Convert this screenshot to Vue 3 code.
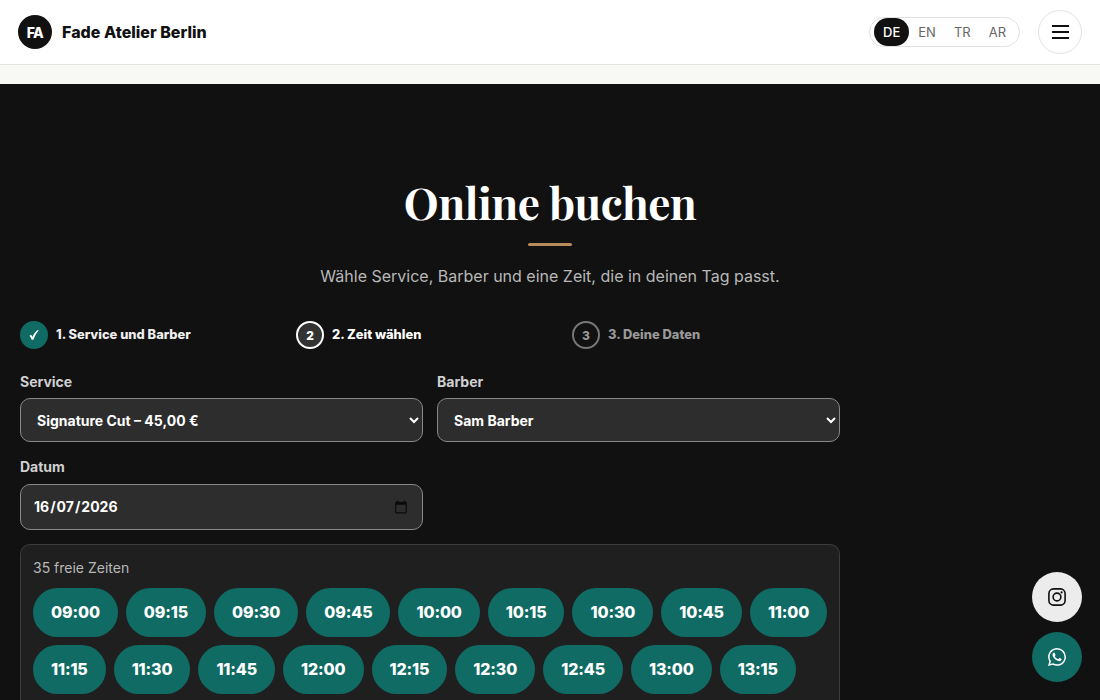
<template>
  <div class="page">
    <header class="top">
      <a class="brand">
        <span class="logo">FA</span>
        <span class="brand-name">Fade Atelier Berlin</span>
      </a>
      <div class="top-right">
        <nav class="langs">
          <button v-for="l in langs" :key="l" :class="{ on: l === lang }" @click="lang = l">{{ l }}</button>
        </nav>
        <button class="burger" aria-label="Menü"><i></i><i></i><i></i></button>
      </div>
    </header>

    <section class="booking">
      <h1>Online buchen</h1>
      <div class="rule"></div>
      <p class="lead">Wähle Service, Barber und eine Zeit, die in deinen Tag passt.</p>

      <div class="wrap">
        <ol class="steps">
          <li v-for="(s, i) in steps" :key="s" :class="{ done: i + 1 < step, now: i + 1 === step }">
            <span class="dot">
              <svg v-if="i + 1 < step" width="12" height="12" viewBox="0 0 12 12" fill="currentColor">
                <path d="M1.5 6.7 3 5.8c.7.7 1.1 1.4 1.4 2.2C5.600 5.300 7.200 3 9.300 1.300h1.500C8.300 4.200 6.600 7.300 5.400 10.800H3.700C3.300 9.200 2.600 7.900 1.500 6.700z" />
              </svg>
              <template v-else>{{ i + 1 }}</template>
            </span>
            <span class="step-name">{{ i + 1 }}. {{ s }}</span>
          </li>
        </ol>

        <div class="fields">
          <label>
            <span>Service</span>
            <select v-model="service">
              <option>Signature Cut – 45,00 €</option>
            </select>
          </label>
          <label>
            <span>Barber</span>
            <select v-model="barber">
              <option>Sam Barber</option>
            </select>
          </label>
          <label>
            <span>Datum</span>
            <div class="date">
              <span class="dmy"><b>16</b>/<b>07</b>/<b>2026</b></span>
              <svg width="14" height="14" viewBox="0 0 24 24" fill="#0a0a0a">
                <path d="M20 3h-1V1h-2v2H7V1H5v2H4c-1.1 0-2 .9-2 2v16c0 1.1.9 2 2 2h16c1.1 0 2-.9 2-2V5c0-1.1-.9-2-2-2zm0 18H4V8h16v13z" />
              </svg>
            </div>
          </label>
        </div>

        <div class="slots">
          <p>35 freie Zeiten</p>
          <div class="times">
            <button v-for="t in times" :key="t" @click="time = t">{{ t }}</button>
          </div>
        </div>
      </div>
    </section>

    <div class="social">
      <a class="ig" aria-label="Instagram">
        <svg width="20" height="20" viewBox="0 0 20 20" fill="none" stroke="currentColor" stroke-width="1.6">
          <rect x="1.9" y="1.9" width="16.2" height="16.2" rx="4.6" />
          <circle cx="10" cy="10" r="3.9" />
          <circle cx="14.6" cy="5.4" r="1.1" fill="currentColor" stroke="none" />
        </svg>
      </a>
      <a class="wa" aria-label="WhatsApp">
        <svg width="18" height="18" viewBox="0 0 24 24" fill="currentColor">
          <path d="M17.472 14.382c-.297-.149-1.758-.867-2.03-.967-.273-.099-.471-.148-.67.15-.197.297-.767.966-.94 1.164-.173.199-.347.223-.644.075-.297-.15-1.255-.463-2.39-1.475-.883-.788-1.48-1.761-1.653-2.059-.173-.297-.018-.458.13-.606.134-.133.298-.347.446-.52.149-.174.198-.298.298-.497.099-.198.05-.371-.025-.52-.075-.149-.669-1.612-.916-2.207-.242-.579-.487-.5-.669-.51-.173-.008-.371-.01-.57-.01-.198 0-.52.074-.792.372-.272.297-1.04 1.016-1.04 2.479 0 1.462 1.065 2.875 1.213 3.074.149.198 2.096 3.2 5.077 4.487.709.306 1.262.489 1.694.625.712.227 1.36.195 1.871.118.571-.085 1.758-.719 2.006-1.413.248-.694.248-1.289.173-1.413-.074-.124-.272-.198-.57-.347m-5.421 7.403h-.004a9.87 9.87 0 01-5.031-1.378l-.361-.214-3.741.982.998-3.648-.235-.374a9.86 9.86 0 01-1.51-5.26c.001-5.45 4.436-9.884 9.888-9.884 2.64 0 5.122 1.03 6.988 2.898a9.825 9.825 0 012.893 6.994c-.003 5.45-4.437 9.884-9.885 9.884m8.413-18.297A11.815 11.815 0 0012.05 0C5.495 0 .16 5.335.157 11.892c0 2.096.547 4.142 1.588 5.945L.057 24l6.305-1.654a11.882 11.882 0 005.683 1.448h.005c6.554 0 11.89-5.335 11.893-11.893a11.821 11.821 0 00-3.48-8.413z" />
        </svg>
      </a>
    </div>
  </div>
</template>

<script setup>
import { ref } from 'vue'

const langs = ['DE', 'EN', 'TR', 'AR']
const lang = ref('DE')

const steps = ['Service und Barber', 'Zeit wählen', 'Deine Daten']
const step = ref(2)

const service = ref('Signature Cut – 45,00 €')
const barber = ref('Sam Barber')
const time = ref('')

// quarter-hour slots from 09:00
const pad = n => String(n).padStart(2, '0')
const times = Array.from({ length: 18 }, (_, i) => `${pad(9 + Math.floor(i / 4))}:${pad((i % 4) * 15)}`)
</script>

<style>
body { margin: 0; background: #f8f8f4; }
</style>

<style scoped>
* { box-sizing: border-box; }
.page { height: 700px; overflow: hidden; display: flex; flex-direction: column; font-family: Inter, "Liberation Sans", sans-serif; color: #111; background: #f8f8f4; }
button, select { font-family: inherit; cursor: pointer; }

.top { flex: none; height: 65px; padding: 0 18px; display: flex; align-items: center; justify-content: space-between; background: #fff; border-bottom: 1px solid #e4e4e1; }
.brand { display: flex; align-items: center; gap: 10px; }
.logo { width: 34px; height: 34px; border-radius: 50%; background: #111; color: #fff; display: flex; align-items: center; justify-content: center; font-size: 14px; font-weight: 800; letter-spacing: -0.5px; }
.brand-name { font-size: 16px; font-weight: 800; }
.top-right { display: flex; align-items: center; gap: 18px; }
.langs { height: 30px; display: flex; align-items: center; padding: 0 4px; border: 1px solid #e2e2e0; border-radius: 999px; }
.langs button { height: 28px; padding: 0 9px; border: 0; border-radius: 999px; background: none; color: #666; font-size: 13px; }
.langs .on { background: #111; color: #fff; font-weight: 500; }
.burger { width: 44px; height: 44px; padding: 0; border: 1px solid #e2e2e0; border-radius: 50%; background: #fff; display: flex; flex-direction: column; align-items: center; justify-content: center; gap: 4px; }
.burger i { width: 17px; height: 2px; background: #111; }

.booking { flex: 1; min-height: 0; margin-top: 19px; padding: 86px 20px 0; background: #111; color: #fff; display: flex; flex-direction: column; }
h1 { margin: 0; text-align: center; font-family: "Playfair Display", "Liberation Serif", serif; font-size: 44px; font-weight: 700; line-height: 64px; letter-spacing: -0.5px; }
.rule { flex: none; width: 44px; height: 3px; margin: 9px auto 0; border-radius: 2px; background: #b88c5a; }
.lead { margin: 17px 0 0; text-align: center; font-size: 16px; line-height: 27px; color: #b8b8b8; }

.wrap { width: 820px; flex: 1; display: flex; flex-direction: column; }
.steps { list-style: none; margin: 31px 0 0; padding: 0; display: grid; grid-template-columns: repeat(3, 1fr); gap: 8px; }
.steps li { display: flex; align-items: center; gap: 8px; font-size: 12.9px; font-weight: 800; color: #999; }
.step-name { padding-bottom: 2px; }
.dot { width: 28px; height: 28px; border: 2px solid #777; border-radius: 50%; display: flex; align-items: center; justify-content: center; font-size: 12px; }
.steps .done { color: #eee; }
.done .dot { background: #0f6b63; border-color: #0f6b63; color: #fff; }
.steps .now { color: #fff; }
.now .dot { background: #333; border-color: #fff; }

.fields { margin-top: 21px; display: grid; grid-template-columns: 1fr 1fr; gap: 14px; }
.fields label { display: flex; flex-direction: column; gap: 6px; font-size: 14px; line-height: 22px; font-weight: 700; color: #d0d0d0; }
.fields label:not(:last-child) > span { padding-top: 2px; line-height: 20px; }
select, .date { width: 100%; padding: 12px; border: 1px solid #888; border-radius: 10px; background: #2d2d2d; color: #fff; font-size: 14px; font-weight: 700; }
select { height: 44px; }
.date { height: 46px; padding: 0 14px 0 13px; display: flex; align-items: center; justify-content: space-between; }
.dmy b { padding: 0 1px; font-weight: inherit; }
.dmy b:first-child { padding-left: 0; }

.slots { flex: 1; margin-top: 14px; padding: 12px; border: 1px solid #3c3c3c; border-bottom: 0; border-radius: 10px 10px 0 0; background: #1f1f1f; }
.slots p { margin: 0; font-size: 14px; line-height: 22px; color: #b8b8b8; }
.times { margin: 9px -2px 0 0; display: flex; flex-wrap: wrap; gap: 8px; }
.times button { height: 49px; padding: 0 18px 2px; border: 0; border-radius: 999px; background: #0f6b63; color: #fff; font-size: 16px; font-weight: 800; letter-spacing: -0.12px; }

.social { position: fixed; right: 18px; bottom: 18px; display: flex; flex-direction: column; gap: 10px; }
.social a { width: 50px; height: 50px; border-radius: 50%; display: flex; align-items: center; justify-content: center; }
.ig { background: #ececec; color: #111; }
.wa { background: #0f6b63; color: #fff; }
</style>
